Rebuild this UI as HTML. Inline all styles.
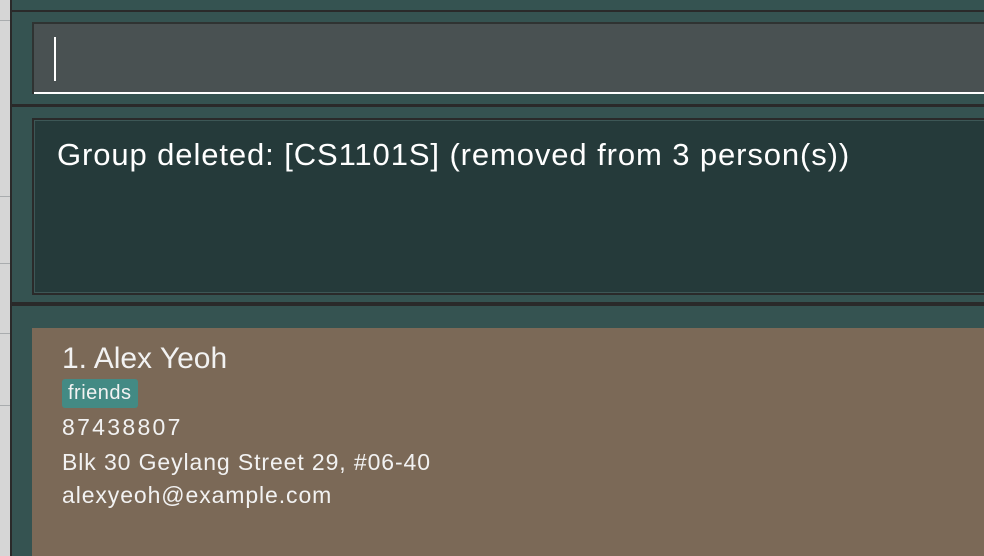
<!DOCTYPE html>
<html><head><meta charset="utf-8"><style>
*{margin:0;padding:0;box-sizing:border-box}
html,body{width:984px;height:556px;overflow:hidden}
body{background:#355351;font-family:"Liberation Sans",sans-serif;position:relative}
.strip{position:absolute;left:0;top:0;width:10px;height:556px;background:#d6d6d6}
.strip i{position:absolute;left:0;width:10px;height:1px;background:#a9acae}
.vb{position:absolute;left:10px;top:0;width:2px;height:556px;background:#2a2a2a}
.hb{position:absolute;left:12px;width:972px;background:#2a2a2a}
.cmd{position:absolute;left:32px;top:22px;width:960px;height:72px;background:#495152;border:2px solid #2f3332;border-bottom:none}
.cmd .ul{position:absolute;left:0;right:0;bottom:0;height:2px;background:#fff}
.cmd .cur{position:absolute;left:20px;top:13px;width:2px;height:44px;background:#fff}
.res{position:absolute;left:32px;top:118px;width:960px;height:177px;background:#253a3a;border:2px solid #2a2a2a;box-shadow:inset 0 0 0 1px #3d5756}
.res p{position:absolute;left:23px;top:17px;color:#fff;font-size:31px;letter-spacing:0.9px;white-space:nowrap}
.card{position:absolute;left:32px;top:328px;width:960px;height:228px;background:#7b6957;color:#f2f2f2}
.name{position:absolute;left:30px;top:14px;font-size:30px}
.tag{position:absolute;left:30px;top:51px;width:76px;height:29px;background:#438a84;border-radius:3px;font-size:20px;letter-spacing:0.5px;padding:3px 0 0 6px}
.l{position:absolute;left:30px;font-size:23px;letter-spacing:0.9px;white-space:nowrap}
</style></head><body>
<div class="strip"><i style="top:20px"></i><i style="top:196px"></i><i style="top:263px"></i><i style="top:333px"></i><i style="top:405px"></i></div>
<div class="vb"></div>
<div class="hb" style="top:10px;height:2px"></div>
<div class="cmd"><div class="cur"></div><div class="ul"></div></div>
<div class="hb" style="top:104px;height:3px"></div>
<div class="res"><p>Group deleted: [CS1101S] (removed from 3 person(s))</p></div>
<div class="hb" style="top:302px;height:4px"></div>
<div class="card">
<div class="name">1. Alex Yeoh</div>
<div class="tag">friends</div>
<div class="l" style="top:86px;letter-spacing:2.3px">87438807</div>
<div class="l" style="top:121px">Blk 30 Geylang Street 29, #06-40</div>
<div class="l" style="top:154px">alexyeoh@example.com</div>
</div>
</body></html>
